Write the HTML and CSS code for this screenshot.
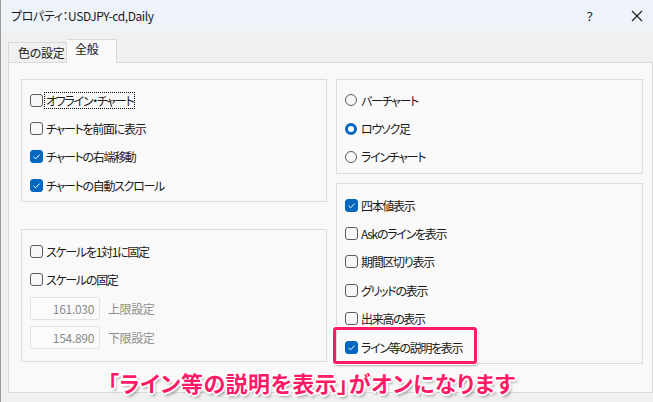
FILE: index.html
```html
<!DOCTYPE html>
<html lang="ja">
<head>
<meta charset="utf-8">
<link rel="stylesheet" href="styles.css">
</head>
<body>
<div class="window">
  <div class="titlebar">
    <span class="title">プロパティ：USDJPY-cd,Daily</span>
    <span class="tb-help">?</span>
    <span class="tb-close"><svg width="12" height="12" viewBox="0 0 12 12"><path d="M1 1L11 11M11 1L1 11" stroke="#1a1a1a" stroke-width="1.1" fill="none"/></svg></span>
  </div>
  <div class="tabs">
    <div class="tab">色の設定</div>
    <div class="tab active">全般</div>
  </div>
  <div class="panel">
    <div class="col">
      <div class="group g1">
        <div class="row"><span class="cb"></span><span class="label focus">オフライン・チャート</span></div>
        <div class="row"><span class="cb"></span><span class="label">チャートを前面に表示</span></div>
        <div class="row"><span class="cb on"><svg viewBox="0 0 13 13"><path d="M3.5 6.8L5.6 8.8L9.6 4.6" stroke="#fff" stroke-width="1" fill="none"/></svg></span><span class="label">チャートの右端移動</span></div>
        <div class="row"><span class="cb on"><svg viewBox="0 0 13 13"><path d="M3.5 6.8L5.6 8.8L9.6 4.6" stroke="#fff" stroke-width="1" fill="none"/></svg></span><span class="label">チャートの自動スクロール</span></div>
      </div>
      <div class="group g2">
        <div class="row"><span class="cb"></span><span class="label">スケールを1対1に固定</span></div>
        <div class="row"><span class="cb"></span><span class="label">スケールの固定</span></div>
        <div class="field"><span class="input">161.030</span><span class="label dis">上限設定</span></div>
        <div class="field"><span class="input">154.890</span><span class="label dis">下限設定</span></div>
      </div>
    </div>
    <div class="col">
      <div class="group g3">
        <div class="row"><span class="rb"></span><span class="label">バーチャート</span></div>
        <div class="row"><span class="rb on"></span><span class="label">ロウソク足</span></div>
        <div class="row"><span class="rb"></span><span class="label">ラインチャート</span></div>
      </div>
      <div class="group g4">
        <div class="row"><span class="cb on"><svg viewBox="0 0 13 13"><path d="M3.5 6.8L5.6 8.8L9.6 4.6" stroke="#fff" stroke-width="1" fill="none"/></svg></span><span class="label">四本値表示</span></div>
        <div class="row"><span class="cb"></span><span class="label">Askのラインを表示</span></div>
        <div class="row"><span class="cb"></span><span class="label">期間区切り表示</span></div>
        <div class="row"><span class="cb"></span><span class="label">グリッドの表示</span></div>
        <div class="row"><span class="cb"></span><span class="label">出来高の表示</span></div>
        <div class="row"><span class="cb on"><svg viewBox="0 0 13 13"><path d="M3.5 6.8L5.6 8.8L9.6 4.6" stroke="#fff" stroke-width="1" fill="none"/></svg></span><span class="label">ライン等の説明を表示</span></div>
        <div class="highlight"></div>
      </div>
    </div>
  </div>
  <div class="caption">「ライン等の説明を表示」がオンになります</div>
</div>
</body>
</html>
```
FILE: styles.css
```css
* { box-sizing: border-box; }
html, body { margin: 0; padding: 0; }
body {
  width: 653px;
  height: 402px;
  overflow: hidden;
  background: #f0f0f0;
  font-family: "Noto Sans CJK JP", "Noto Sans", sans-serif;
  font-feature-settings: "palt";
  color: #1a1a1a;
}
.window {
  position: relative;
  width: 653px;
  height: 402px;
  background: #f0f0f0;
  border-left: 1px solid #9a9a9a;
}
.titlebar {
  height: 31px;
  background: #eef3f9;
  display: flex;
  align-items: center;
  padding-left: 10px;
  font-size: 12px;
  letter-spacing: -0.4px;
}
.title { flex: 1; }
.tb-help { width: 14px; margin-right: 30px; font-family: "Noto Sans", sans-serif; font-size: 13px; }
.tb-close { width: 12px; height: 12px; margin-right: 10px; display: flex; }
.tabs {
  display: flex;
  align-items: flex-end;
  padding-left: 7px;
  margin-top: 8px;
  height: 23px;
}
.tab {
  height: 20px;
  width: 59px;
  padding-left: 9px;
  border: 1px solid #d9d9d9;
  border-bottom: none;
  background: #f0f0f0;
  font-size: 12px;
  letter-spacing: -0.3px;
  line-height: 19px;
  white-space: nowrap;
}
.tab.active {
  height: 24px;
  width: 50px;
  padding-left: 8px;
  background: #f9f9f9;
  border-left: none;
  margin-bottom: -1px;
  position: relative;
  z-index: 1;
  line-height: 18px;
}
.panel {
  margin-left: 7px;
  width: 645px;
  height: 331px;
  background: #f9f9f9;
  border: 1px solid #dadada;
  display: grid;
  grid-template-columns: 306px 307px;
  column-gap: 9px;
  padding: 16px 0 0 12px;
}
.col { display: flex; flex-direction: column; }
.group {
  border: 1px solid #dcdcdc;
  background: #f9f9f9;
  padding: 6px 0 0 8px;
}
.g1 { height: 123px; }
.g2 { height: 133px; margin-top: 27px; padding-top: 7px; }
.g3 { height: 95px; }
.g4 { height: 181px; margin-top: 9px; position: relative; padding-top: 7px; }
.row {
  height: 28.4px;
  display: flex;
  align-items: center;
  font-size: 12px;
}
.label { letter-spacing: -1.3px; line-height: 15px; white-space: nowrap; }
.label.focus { outline: 1px dotted #000; outline-offset: 0; padding: 0 1px 0 1px; margin-left: -1px; }
.cb {
  width: 13px;
  height: 13px;
  border: 1px solid #5c5c5c;
  border-radius: 3px;
  background: #f7f7f7;
  margin-right: 3px;
  flex: none;
  display: flex;
}
.cb svg { width: 13px; height: 13px; margin: -1px; }
.cb.on { background: #0067c0; border-color: #0067c0; }
.rb {
  width: 12px;
  height: 12px;
  border: 1px solid #5c5c5c;
  border-radius: 50%;
  background: #f7f7f7;
  margin-right: 4px;
  flex: none;
}
.rb.on { background: #fff; border: 3.5px solid #0067c0; }
.field {
  display: flex;
  align-items: center;
  height: 29px;
  font-size: 12px;
}
.g2 .field:first-of-type { margin-top: 2px; }
.input {
  width: 70px;
  height: 23px;
  border: 1px solid #e2e2e2;
  border-radius: 2px;
  background: #fbfbfb;
  color: #8a8a8a;
  text-align: right;
  padding-right: 5px;
  line-height: 21px;
  margin-right: 8px;
  letter-spacing: -0.3px;
}
.label.dis { color: #8e8e8e; letter-spacing: -0.4px; }
.highlight {
  position: absolute;
  left: -4px;
  top: 143px;
  width: 144px;
  height: 37px;
  border: 3px solid #ff1a66;
  border-radius: 3px;
  box-shadow: 0 0 0 1px #fff, 1px 2px 2px rgba(0,0,0,0.3);
}
.caption {
  position: absolute;
  left: 107px;
  top: 366px;
  font-size: 22px;
  font-weight: bold;
  color: #ff1a66;
  letter-spacing: 0.5px;
  white-space: nowrap;
  text-shadow: -1px -1px 0 #fff, 1px -1px 0 #fff, -1px 1px 0 #fff, 1px 1px 0 #fff, 0 2px 0 #fff, 2px 0 0 #fff, -2px 0 0 #fff, 0 -2px 0 #fff, 2px 3px 3px rgba(0,0,0,0.35);
}
```
